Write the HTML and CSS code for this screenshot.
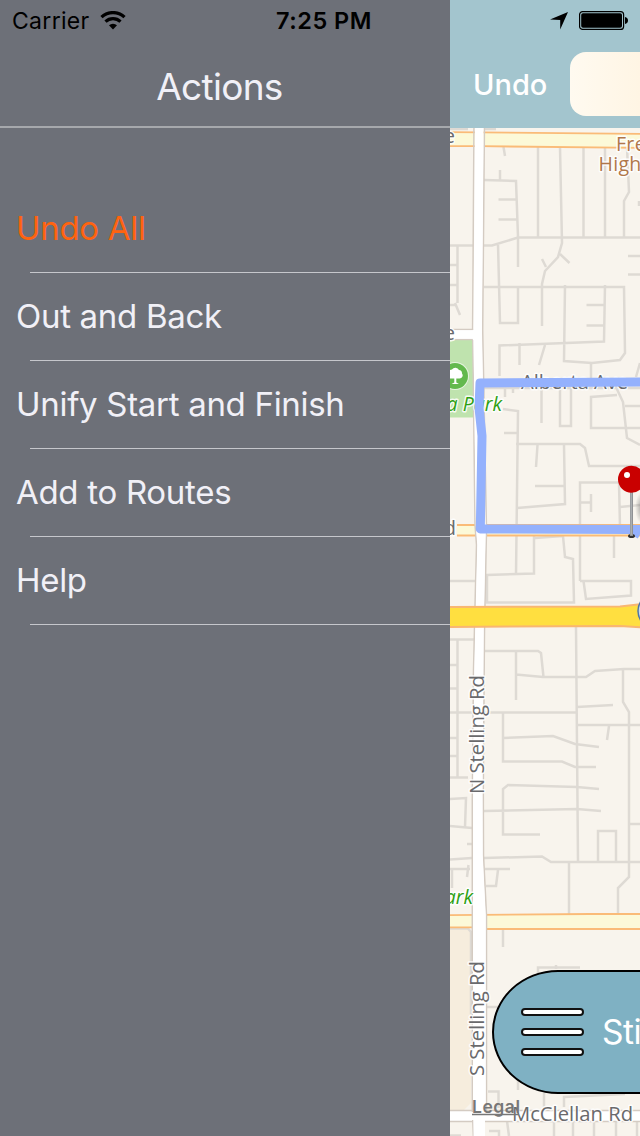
FILE: index.html
```html
<!DOCTYPE html>
<html lang="en">
<head>
    <meta charset="UTF-8">
    <meta name="viewport" content="width=device-width, initial-scale=1.0">
    <title>Actions</title>
    <link rel="stylesheet" href="styles.css">
</head>
<body>
    <div class="app">
        <div class="status-bar">
            <div class="status-left">
                <span class="carrier">Carrier</span>
                <svg class="wifi" width="26" height="19" viewBox="0 0 26 19">
                    <path d="M1.500 6.200a16.500 16.500 0 0 1 23 0" fill="none" stroke="#000" stroke-width="3.200"/>
                    <path d="M5.500 10.600a11 11 0 0 1 15 0" fill="none" stroke="#000" stroke-width="3.200"/>
                    <path d="M9 14.200a6 6 0 0 1 8 0L13 18.400z"/>
                </svg>
            </div>
            <span class="clock">7:25 PM</span>
            <div class="status-right">
                <svg width="18" height="18" viewBox="0 0 18 18"><path d="M18 0L10.200 17.600V8L0 7.600z"/></svg>
                <svg width="49" height="19" viewBox="0 0 49 19">
                    <rect x=".6" y=".6" width="44" height="17.800" rx="3" fill="none" stroke="#000" stroke-width="1.200"/>
                    <rect x="2.200" y="2.200" width="40.800" height="14.600" rx="1.800"/>
                    <path d="M46 6c4 .6 4 6.400 0 7z"/>
                </svg>
            </div>
        </div>

        <aside class="sidebar">
            <header class="sidebar-header"><h1>Actions</h1></header>
            <ul class="actions">
                <li class="action danger">Undo All</li>
                <li class="action">Out and Back</li>
                <li class="action">Unify Start and Finish</li>
                <li class="action">Add to Routes</li>
                <li class="action">Help</li>
            </ul>
        </aside>

        <main class="main">
            <nav class="toolbar">
                <span class="undo">Undo</span>
                <div class="search"></div>
            </nav>
            <div class="map">
                <svg class="map-svg" width="190" height="1008" viewBox="450 128 190 1008">
                    <defs>
                        <radialGradient id="shadow">
                            <stop offset="0" stop-color="#555" stop-opacity=".5"/>
                            <stop offset="1" stop-color="#555" stop-opacity="0"/>
                        </radialGradient>
                    </defs>

                    <!-- areas -->
                    <rect x="450" y="339" width="23" height="78.500" fill="#bfe3ae"/>
                    <path d="M450 929H468L471 932V1103L464 1110H450z" fill="#f6eddd"/>

                    <!-- side streets -->
                    <g class="streets">
                        <path d="M450 129h18M484 129h12M503.500 147L505 156M500 170V180M484 180L516 181L518 237V267M498.500 199.500H517M498.500 219.500H517M538 147V237M560 147L562 243L558 257L545 271L542 284V326M583.500 147V237M605 147V237M627 147L629 192L624 201V237"/>
                        <path d="M450 245.500H473M484 245.500H492L518 237.500H640M457.500 246V303M455 303L460 315M450 265H457M450 285H457M450 305H456M498 244L500 323H518V287M484 287H624L625 353L620 360L592 363L564 361L565 285M569.500 263L560 254M542 259L546 267M605 285L604 341.500L499.500 345.500V376M586.500 305H605M586.500 325.500H605M628 256H640M628 274.500H640M639 201V206"/>
                        <path d="M519.500 343V365M545 345L539 365M591 363V379M640 363L636 377M640 428H591V397L617 395M615 385L623 402L627 438L640 445M625 406H640M541.500 388V423M560 388V426H571V388M505 388V397M513 388V393M484 388H640M503 409L518 411L516 575M504 433H517M516 444H580L585 448L589 466H640M537.500 445L536 467M564 445L565 504L517 508M535 486H565M580 581V482.500H619L620 527M620 507L640 505M580 502.500H591M591 494V512"/>
                        <path d="M534 535V573.500L487 575V602.500H574L573 559L565 557L563 536L535 538M614 535V558M580 581H631V595.500L586 599L583.500 581M450 581H475M450 639.500H474M457.500 640V777M450 665H457M450 688.500H457M450 712.500H576M450 738H457M485 651H538L541 653L543.500 677M516 651V700M516 674.500L543 677H586L595 671L624 669H640M576 627L578 862M577 707L613 705M577 725H640M623 669V702L629 712V877L618 888V914M609 726L607 740M503 712V761.500H562L575 767H596M503 738L553 736L575 744L599 747"/>
                        <path d="M450 756H457M450 777.500H468M450 799L466 798L465 827M450 826L472 828M467 844H472M540 834.500H503V789L508 785L577 787L599 789M484 811L577 809L601 811M450 859.500L472 858M484 858L542 856.500L551 862H640M598 862V831H616V862M629 824H640M569 862V914M450 869H470M468.500 865L467 877M452 870V888M485 869H510M498 870L496 886H486M503 930V947"/>
                        <path d="M450 928.500H468L471 932V1014M538 975V967.500H580M556 965V969M486 1007H500M488 1091.500H498.500V1108M518 1075V1090M544 1093V1110M564 1107V1097L625 1094M554 1121V1136M573 1121V1136M594 1121V1136M616 1121V1136M637 1121V1136M507 1121L509 1136M489 1131H499V1136M450 1135.500H461"/>
                    </g>

                    <!-- cross roads -->
                    <path class="white-road" d="M440 329.500H480V339.500H440zM440 1110.500H650V1121.500H440z"/>
                    <path class="yellow-road" d="M440 132L480 132.300L650 134V148L480 146.200H440zM457 525H650V535.500H457"/>
                    <path class="yellow-road" d="M440 915.300L590 914H650V929H480L478 927.300H440z"/>

                    <!-- Stelling Rd -->
                    <path class="white-road" d="M474 120L472.600 330M472.800 340L475 525L476.500 545L475 606L473.500 670L472.300 800V1109L473.500 1140H484V1121L486.500 1110V915L483.500 855L483.300 790L484.500 630L486.500 530L482.700 330L484.500 120"/>
                    <path d="M475 120L473.500 330V340L476 525L477.500 545L476 606L474.500 670L473.300 800V1112H450V1120H473.500V1136H485V1120H640V1112H485.500V915L482.500 855L482.300 790L483.500 630L485.500 530L481.700 330L483.500 120z" fill="#fff"/>
                    <rect x="450" y="330.300" width="24" height="8.400" fill="#fff"/>
                    <path class="highway" d="M440 607L620 606.500L650 603V628L620 626L440 627z"/>

                    <!-- labels under the route -->
                    <g class="label">
                        <text x="521" y="388.500" textLength="107">Alberta Ave</text>
                        <text class="end" x="455" y="143">e</text>
                        <text class="end" x="455" y="339.500">e</text>
                        <text class="end" x="456" y="535">d</text>
                        <text transform="translate(483.500 794) rotate(-90)" textLength="119" lengthAdjust="spacingAndGlyphs">N Stelling Rd</text>
                        <text transform="translate(484 1076) rotate(-90)" textLength="115" lengthAdjust="spacingAndGlyphs">S Stelling Rd</text>
                        <text x="512" y="1120.500" textLength="121" lengthAdjust="spacingAndGlyphs">McClellan Rd</text>
                    </g>
                    <g class="label brown">
                        <text x="616" y="151">Fre</text>
                        <text x="598.500" y="170.500">High</text>
                    </g>
                    <g class="label park">
                        <text class="end" x="502" y="411">a Park</text>
                        <text class="end" x="473" y="904">ark</text>
                    </g>
                    <circle cx="455" cy="376" r="14" fill="#e6f3df"/>
                    <circle cx="455" cy="376" r="13" fill="#63b94d"/>
                    <path d="M451.500 384L454.300 382.500V378.500H450.500A3.300 3.300 0 0 1 448.500 372.700A3.500 3.500 0 0 1 452 369.500A4 4 0 0 1 459 370A3.400 3.400 0 0 1 462 373.500A3.100 3.100 0 0 1 459.500 378.500H456.300V382.500L459 384z" fill="#fff"/>

                    <!-- route -->
                    <path class="route" d="M645 382L480 383L479 408L482 436L480.300 529L631 529.500L640 534.500M631 529.500H645"/>

                    <!-- start pin -->
                    <circle cx="656" cy="611" r="18" fill="#c8d8ec" stroke="#4c74a8" stroke-width="1.500"/>
                    <ellipse cx="642" cy="508" rx="7" ry="16" fill="url(#shadow)"/>
                    <ellipse cx="631.500" cy="536" rx="3.500" ry="2" fill="#333"/>
                    <path d="M631.500 490V536" stroke="#8f9194" stroke-width="3"/>
                    <path d="M631.200 490V535" stroke="#b9bbbd" stroke-width="1"/>
                    <circle cx="631.500" cy="479.300" r="13.500" fill="#c90000"/>
                    <circle cx="627" cy="475" r="3" fill="#fff"/>

                    <text class="legal" x="472" y="1112.500" textLength="48">Legal</text>
                    <path d="M472 1114.500H519" stroke="#777" stroke-width="1.500"/>
                </svg>
                <div class="menu-btn">
                    <div class="bars"><i></i><i></i><i></i></div>
                    <span>Sti</span>
                </div>
            </div>
        </main>
    </div>
</body>
</html>
```
FILE: styles.css
```css
* {
    box-sizing: border-box;
}
body {
    margin: 0;
    font-family: Inter, "Liberation Sans", sans-serif;
    background: #6d7078;
}
.app {
    position: relative;
    display: flex;
    width: 640px;
    height: 1136px;
    overflow: hidden;
}

/* status bar sits over both panes */
.status-bar {
    position: absolute;
    top: 0;
    left: 0;
    z-index: 2;
    width: 100%;
    height: 41px;
    padding: 0 12px 0 12px;
    display: grid;
    grid-template-columns: 264px 1fr auto;
    align-items: center;
    line-height: 40px;
    color: #000;
}
.status-left,
.status-right {
    display: flex;
    align-items: center;
    gap: 11px;
}
.carrier {
    padding-top: 1px;
    font-size: 23px;
    letter-spacing: 0.300px;
}
.wifi {
    margin-left: -1px;
}
.clock {
    font-size: 23.500px;
    font-weight: 600;
    letter-spacing: 0.500px;
}

.sidebar {
    width: 450px;
    background: #6d7078;
    color: #f1f0f7;
}
.sidebar-header {
    height: 128px;
    padding: 47px 11px 0 0;
    border-bottom: 2px solid #a6a8ac;
    text-align: center;
}
h1 {
    margin: 0;
    font-size: 37px;
    font-weight: 400;
    letter-spacing: -0.700px;
    line-height: 80px;
}
.actions {
    list-style: none;
    margin: 57px 0 0;
    padding: 0;
}
.action {
    height: 88px;
    padding-left: 16px;
    font-size: 33px;
    font-weight: 400;
    letter-spacing: -0.300px;
    line-height: 87px;
    background: linear-gradient(#c6c7cc, #c6c7cc) 30px 100% / 100% 1px no-repeat;
}
.danger {
    color: #ff6310;
}

.main {
    width: 190px;
    display: flex;
    flex-direction: column;
}
.toolbar {
    height: 128px;
    padding: 40px 0 0 23px;
    display: flex;
    align-items: center;
    background: #a3c5ce;
    overflow: hidden;
}
.undo {
    width: 97px;
    flex: none;
    font-size: 29px;
    font-weight: 500;
    color: #fff;
}
.search {
    flex: none;
    width: 200px;
    height: 64px;
    border-radius: 16px;
    background: linear-gradient(90deg, #fffaf0, #fff5e4 70px);
}

.map {
    position: relative;
    flex: 1;
    overflow: hidden;
    background: #f8f4ed;
}
.map-svg {
    display: block;
}
.streets {
    fill: none;
    stroke: #dedad4;
    stroke-width: 2.500;
}
.white-road {
    fill: #fff;
    stroke: #d4cbc2;
    stroke-width: 1.500;
}
.yellow-road {
    fill: #fcf9d8;
    stroke: #fabb78;
    stroke-width: 1.800;
}
.highway {
    fill: #ffdf40;
    stroke: #f9b672;
    stroke-width: 2;
}
.route {
    fill: none;
    stroke: #94b1fd;
    stroke-width: 9;
    stroke-linejoin: round;
}
.label {
    font-family: "Open Sans", "Noto Sans", sans-serif;
    font-size: 20px;
    font-weight: 500;
    fill: #6a6a6c;
    stroke: #fff;
    stroke-width: 3;
    stroke-opacity: 0.850;
    stroke-linejoin: round;
    paint-order: stroke;
}
.brown {
    fill: #b0774a;
    font-size: 19.500px;
    letter-spacing: 0.300px;
}
.park {
    fill: #2ea012;
    font-style: italic;
    font-size: 19.500px;
}
.end {
    text-anchor: end;
}
.legal {
    font-size: 17.500px;
    font-weight: 600;
    fill: #777;
}
.menu-btn {
    position: absolute;
    left: 42px;
    top: 842px;
    width: 300px;
    height: 124px;
    padding-left: 27px;
    display: flex;
    align-items: center;
    gap: 18px;
    border: 2px solid #000;
    border-radius: 66px / 62px;
    background: #7fb1c3;
    color: #fff;
    font-size: 33.500px;
    font-weight: 400;
    letter-spacing: -0.500px;
}
.bars {
    display: flex;
    flex-direction: column;
    gap: 12px;
}
.bars i {
    width: 63px;
    height: 8px;
    border: 2px solid #111;
    border-radius: 4px;
    background: #fff;
}
```
